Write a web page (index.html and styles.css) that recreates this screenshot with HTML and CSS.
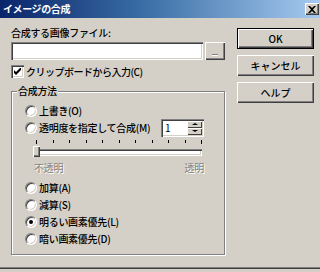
FILE: index.html
```html
<!DOCTYPE html>
<html lang="ja">
<head>
  <meta charset="UTF-8">
  <title>イメージの合成</title>
  <link rel="stylesheet" href="styles.css">
</head>
<body>
  <div class="dialog">
    <!-- タイトルバー -->
    <div class="titlebar">
      <span class="title">イメージの合成</span>
      <span class="close">
        <svg width="8" height="7" viewBox="0 0 8 7"><path d="M0 0h2l2 2 2-2h2L5 3.5 8 7H6L4 5 2 7H0l3-3.5z" fill="#000"/></svg>
      </span>
    </div>

    <div class="body">
      <div class="main">
        <div class="label">合成する画像ファイル:</div>
        <div class="file-row">
          <div class="input"></div>
          <div class="btn browse"><span class="dots"></span></div>
        </div>
        <div class="check-row">
          <span class="checkbox">
            <svg width="7" height="7" viewBox="0 0 7 7"><path d="M0 2v3l2 2 5-5V-1L2 4z" fill="#000"/></svg>
          </span>
          <span>クリップボードから入力(C)</span>
        </div>

        <!-- 合成方法 -->
        <fieldset class="group">
          <legend>合成方法</legend>
          <div class="radio-row"><span class="radio"></span>上書き(O)</div>
          <div class="radio-row">
            <span class="radio"></span>透明度を指定して合成(M)
            <div class="spin">
              <span class="spin-value">1</span>
              <div class="spin-buttons">
                <span class="spin-btn"><i class="arrow up"></i></span>
                <span class="spin-btn"><i class="arrow down"></i></span>
              </div>
            </div>
          </div>
          <div class="slider">
            <div class="ticks">
              <i></i><i></i><i></i><i></i><i></i><i></i><i></i><i></i><i></i><i></i><i></i>
            </div>
            <div class="track"></div>
            <div class="thumb"></div>
          </div>
          <div class="slider-labels"><span>不透明</span><span>透明</span></div>
          <div class="radio-row first"><span class="radio"></span>加算(A)</div>
          <div class="radio-row"><span class="radio"></span>減算(S)</div>
          <div class="radio-row"><span class="radio checked"></span>明るい画素優先(L)</div>
          <div class="radio-row"><span class="radio"></span>暗い画素優先(D)</div>
        </fieldset>
      </div>

      <div class="side">
        <div class="btn default">OK</div>
        <div class="btn">キャンセル</div>
        <div class="btn">ヘルプ</div>
      </div>
    </div>

    <div class="bottom-edge"></div>
  </div>
</body>
</html>
```

FILE: styles.css
```css
/* 基本 */
* {
  margin: 0;
  padding: 0;
  box-sizing: border-box;
}

body {
  font-family: "Noto Sans CJK JP", "Noto Sans", sans-serif;
  font-size: 10px;
  font-weight: 500;
  line-height: 12px;
  color: #000;
  background: #d4d0c8;
}

.dialog {
  width: 320px;
  height: 272px;
  display: flex;
  flex-direction: column;
  background: #d4d0c8;
  overflow: hidden;
}

/* タイトルバー */
.titlebar {
  height: 18px;
  display: flex;
  align-items: center;
  justify-content: space-between;
  padding: 0 1px 0 3px;
  background: linear-gradient(to right, #0a246a, #3a6ea5 45%, #a6caf0);
}

.title {
  color: #fff;
  font-weight: bold;
  letter-spacing: -0.4px;
}

.close {
  width: 14px;
  height: 12px;
  display: flex;
  align-items: center;
  justify-content: center;
  background: #d4d0c8;
  box-shadow: inset 1px 1px #fff, inset -1px -1px #404040, inset -2px -2px #808080;
}

/* 本体 */
.body {
  display: flex;
  padding: 9px 6px 0 11px;
}

.main {
  width: 214px;
}

.label {
  letter-spacing: -0.3px;
}

.file-row {
  display: flex;
  gap: 2px;
  margin-top: 3px;
}

.input {
  width: 192px;
  height: 18px;
  background: #fff;
  box-shadow: inset 1px 1px #808080, inset 2px 2px #404040, inset -1px -1px #fff, inset -2px -2px #d4d0c8;
}

.btn {
  height: 21px;
  display: flex;
  align-items: center;
  justify-content: center;
  background: #d4d0c8;
  box-shadow: inset 1px 1px #fff, inset -1px -1px #404040, inset -2px -2px #808080;
}

.btn.default {
  border: 1px solid #000;
}

.browse {
  width: 20px;
  height: 18px;
  align-items: flex-end;
  padding-bottom: 5px;
}

.dots {
  width: 6px;
  height: 1px;
  background: #808080;
  box-shadow: 0 1px #fff;
}

.check-row {
  display: flex;
  align-items: center;
  gap: 2px;
  margin-top: 5px;
  height: 13px;
  letter-spacing: -0.5px;
}

.checkbox {
  width: 13px;
  height: 13px;
  flex-shrink: 0;
  display: flex;
  align-items: center;
  justify-content: center;
  background: #fff;
  box-shadow: inset 1px 1px #808080, inset 2px 2px #404040, inset -1px -1px #fff, inset -2px -2px #d4d0c8;
}

/* 合成方法 */
.group {
  margin-top: 7px;
  width: 214px;
  border: 1px solid #808080;
  box-shadow: inset 1px 1px #fff, 1px 1px #fff;
  padding: 5px 20px 7px 13px;
}

.group legend {
  margin-left: -8px;
  padding: 0 1px;
  background: #d4d0c8;
  letter-spacing: -0.3px;
}

.radio-row {
  display: flex;
  align-items: center;
  height: 17px;
  letter-spacing: -0.3px;
}

.radio-row.first {
  margin-top: 5px;
}

.radio {
  width: 12px;
  height: 12px;
  flex-shrink: 0;
  margin-right: 2px;
  border-radius: 50%;
  border: 1px solid;
  border-color: #808080 #fff #fff #808080;
  background: #fff;
  box-shadow: inset 1px 1px #404040, inset -1px -1px #d4d0c8;
  display: flex;
  align-items: center;
  justify-content: center;
}

.radio.checked::after {
  content: "";
  width: 4px;
  height: 4px;
  border-radius: 50%;
  background: #000;
}

.spin {
  margin-left: auto;
  width: 43px;
  height: 18px;
  display: flex;
  align-items: center;
  justify-content: space-between;
  padding: 2px;
  background: #fff;
  box-shadow: inset 1px 1px #808080, inset 2px 2px #404040, inset -1px -1px #fff, inset -2px -2px #d4d0c8;
}

.spin-value {
  padding-left: 2px;
  font-weight: 400;
  letter-spacing: 0;
}

.spin-buttons {
  display: flex;
  flex-direction: column;
  width: 15px;
  height: 14px;
}

.spin-btn {
  flex: 1;
  display: flex;
  align-items: center;
  justify-content: center;
  background: #d4d0c8;
  box-shadow: inset 1px 1px #fff, inset -1px -1px #404040;
}

.arrow {
  width: 0;
  height: 0;
  border-left: 3px solid transparent;
  border-right: 3px solid transparent;
}

.arrow.up {
  border-bottom: 2px solid #000;
}

.arrow.down {
  border-top: 2px solid #000;
}

/* スライダー */
.slider {
  position: relative;
  height: 23px;
  padding: 4px 2px 0 8px;
}

.ticks {
  display: flex;
  justify-content: space-between;
  margin: 0 0 0 3px;
}

.ticks i {
  width: 1px;
  height: 3px;
  background: #000;
}

.ticks i:first-child,
.ticks i:last-child {
  height: 4px;
}

.track {
  margin-top: 5px;
  height: 7px;
  background: #fff;
  box-shadow: inset 1px 1px #808080, inset 2px 2px #404040, inset -1px -1px #fff, inset -2px -2px #d4d0c8;
}

.thumb {
  position: absolute;
  left: 8px;
  top: 10px;
  width: 7px;
  height: 11px;
  background: #d4d0c8;
  box-shadow: inset 1px 1px #fff, inset -1px -1px #404040, inset -2px -2px #808080;
}

.slider-labels {
  display: flex;
  justify-content: space-between;
  padding-left: 9px;
  margin-top: 3px;
  color: #808080;
  font-weight: 400;
  text-shadow: 1px 1px #fff;
  letter-spacing: -0.3px;
}

/* ボタン列 */
.side {
  width: 77px;
  margin-left: 12px;
  margin-top: 1px;
  display: flex;
  flex-direction: column;
  gap: 6px;
}

.bottom-edge {
  margin-top: auto;
  margin-bottom: 3px;
  height: 2px;
  border-top: 1px solid #808080;
  border-bottom: 1px solid #404040;
}
```
